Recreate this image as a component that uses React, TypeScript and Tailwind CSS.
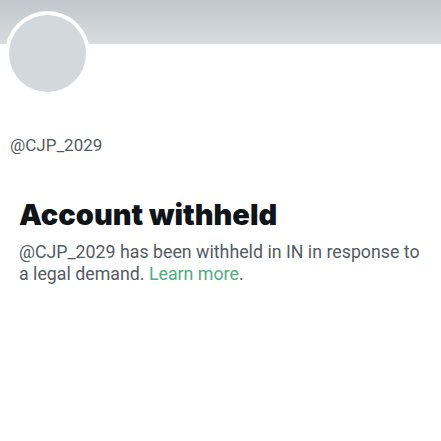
export default function App() {
  return (
    <div className="w-[441px] h-[441px] bg-white overflow-hidden" style={{ fontFamily: 'Roboto, "Liberation Sans", sans-serif' }}>
      <div className="h-[44px] bg-gradient-to-b from-[#c1c8cd] to-[#d6dbdf]" />
      <div className="relative h-[90px]">
        <div className="absolute left-[5px] top-[-33px] w-[85px] h-[85px] rounded-full bg-white flex items-center justify-center">
          <div className="w-[77px] h-[77px] rounded-full bg-[#d3d8dc]" />
        </div>
      </div>
      <div className="pl-[10px] text-[17px] leading-[22px] text-[#545b63]">@CJP_2029</div>
      <div className="px-[19px] pt-[42px]">
        <h1 className="text-[29px] leading-[34px] font-black text-[#0f1419]" style={{ fontFamily: 'Inter, sans-serif' }}>Account withheld</h1>
        <p className="mt-[9px] text-[17.8px] leading-[22px] text-[#545b63]">
          @CJP_2029 has been withheld in IN in response to a legal demand. <span className="text-[#4fae80]">Learn more</span>.
        </p>
      </div>
    </div>
  );
}
